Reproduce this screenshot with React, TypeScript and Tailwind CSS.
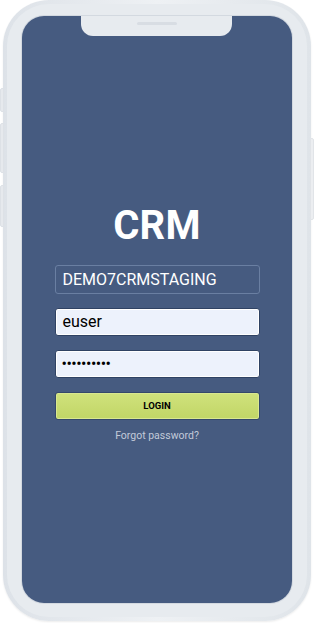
import React from "react";

export default function App() {
  return (
    <div className="relative w-[314px] h-[623px] bg-white overflow-hidden" style={{ fontFamily: "Roboto, 'Liberation Sans', sans-serif" }}>
      {/* side buttons */}
      <div className="absolute left-0 top-[88px] w-[4px] h-[24px] rounded-l-[2px] bg-[#e6e9ed] border border-[#dde1e6]" />
      <div className="absolute left-0 top-[123px] w-[4px] h-[50px] rounded-l-[2px] bg-[#e6e9ed] border border-[#dde1e6]" />
      <div className="absolute left-0 top-[185px] w-[4px] h-[42px] rounded-l-[2px] bg-[#e6e9ed] border border-[#dde1e6]" />
      <div className="absolute right-0 top-[138px] w-[4px] h-[82px] rounded-r-[2px] bg-[#eceef1] border border-[#e1e4e8]" />

      <div className="ml-[3px] w-[308px] h-[621px] rounded-[46px] bg-gradient-to-r from-[#dde2e8] via-[#eef1f4] to-[#dfe4e9] p-[4px] shadow-[0_1px_2px_rgba(0,0,0,0.08)]">
        <div className="w-full h-full rounded-[42px] bg-[#e7ebef] px-[15px] pt-[12px] pb-[14px]">
          <div className="relative w-[270px] h-[587px] rounded-[22px] bg-[#465b80] overflow-hidden flex flex-col items-center shadow-[0_0_0_1px_#d3d9e0]">
            {/* notch */}
            <div className="absolute left-[59px] top-0 w-[151px] h-[20px] rounded-b-[12px] bg-[#e7ebef] flex justify-center">
              <div className="mt-[6px] w-[40px] h-[3px] rounded-full bg-[#d8dde3]" />
            </div>

            <div className="pt-[190px] text-[40px] leading-none font-bold text-white tracking-[0.3px]">CRM</div>

            <div className="mt-[19px] w-[205px] h-[29px] rounded-[3px] border border-[#6a7fa2] bg-[#465b80] flex items-center px-[7px] text-[16px] text-white">
              DEMO7CRMSTAGING
            </div>

            <div className="mt-[14px] w-[205px] h-[28px] rounded-[3px] border border-[#2f4263] bg-[#edf2fc] flex items-center px-[7px] text-[16px] text-black shadow-[inset_0_0_0_1px_#ffffff]">
              euser
            </div>

            <div className="mt-[14px] w-[205px] h-[28px] rounded-[3px] border border-[#2f4263] bg-[#edf2fc] flex items-center px-[6px] text-[16px] text-black tracking-[-0.5px] shadow-[inset_0_0_0_1px_#ffffff]">
              ••••••••••
            </div>

            <div className="mt-[14px] w-[205px] h-[28px] rounded-[3px] border border-[#34486a] bg-gradient-to-b from-[#d0e27c] to-[#c1d666] flex items-center justify-center text-[9.5px] font-bold text-black shadow-[inset_0_0_0_1px_#d9e88f]">
              LOGIN
            </div>

            <div className="mt-[9px] text-[10.5px] leading-[13px] text-[#c2cad9]">Forgot password?</div>
          </div>
        </div>
      </div>
    </div>
  );
}
